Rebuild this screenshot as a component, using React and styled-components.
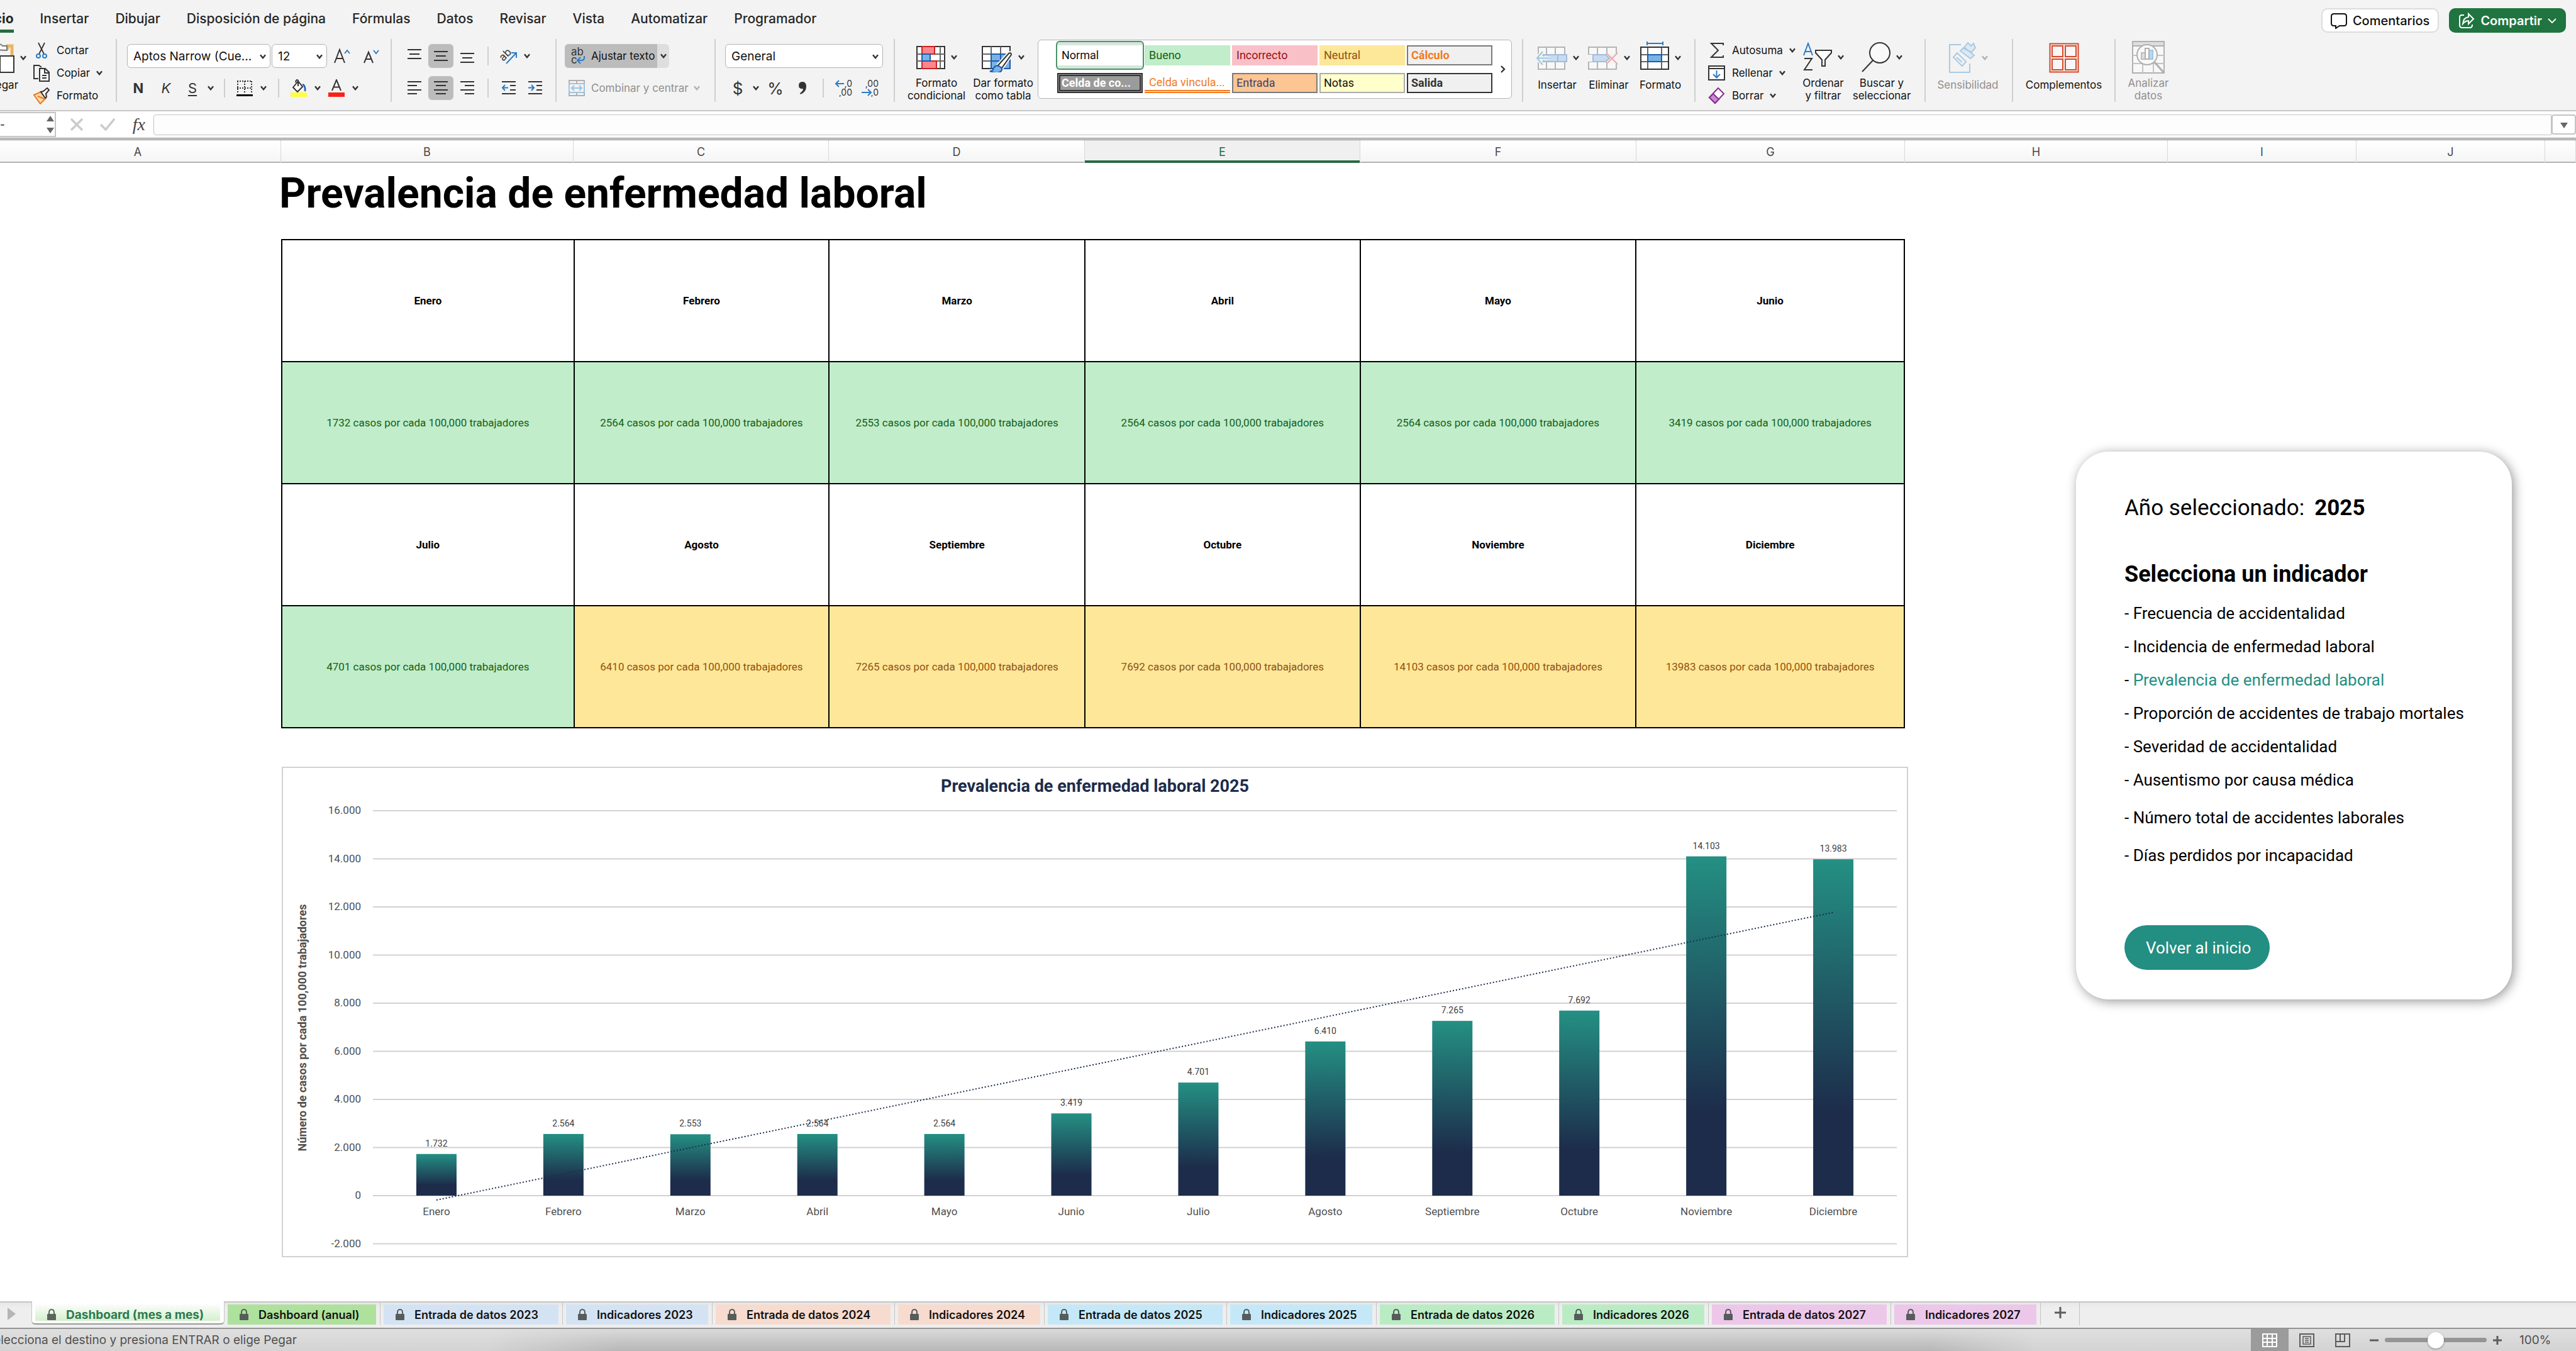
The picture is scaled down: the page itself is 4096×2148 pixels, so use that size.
import React from "react"
import styled, { createGlobalStyle, css } from "styled-components"

const GlobalStyle = createGlobalStyle`
  * {
    box-sizing: border-box;
  }

  body {
    margin: 0;
    background: #fff;
    color: #111;
    font-family: Inter, "Liberation Sans", sans-serif;
    font-size: 17px;
    overflow: hidden;
  }

  button, input, select {
    font: inherit;
    color: inherit;
  }

  button {
    padding: 0;
    border: 0;
    background: none;
  }
`;

const INK = "#333";
const BLUE = "#2b7cc4";
const sheetFont = `Roboto, "Liberation Sans", sans-serif`;

/* ---------- data ---------- */

const menu = ["Insertar", "Dibujar", "Disposición de página", "Fórmulas", "Datos", "Revisar", "Vista", "Automatizar", "Programador"];

const columns = [
  ["A", 447], ["B", 465], ["C", 406], ["D", 407], ["E", 438], ["F", 439],
  ["G", 427], ["H", 418], ["I", 300], ["J", 300], ["", 49],
];

const template = columns.map(([, w]) => `minmax(0, ${w}fr)`).join(" ");

const months = [
  ["Enero", 1732], ["Febrero", 2564], ["Marzo", 2553], ["Abril", 2564],
  ["Mayo", 2564], ["Junio", 3419], ["Julio", 4701], ["Agosto", 6410],
  ["Septiembre", 7265], ["Octubre", 7692], ["Noviembre", 14103], ["Diciembre", 13983],
];

const cellStyles = [
  { name: "Normal", selected: true },
  { name: "Bueno", bg: "#c1edca", color: "#145f16" },
  { name: "Incorrecto", bg: "#f9c0c8", color: "#951218" },
  { name: "Neutral", bg: "#fde799", color: "#8f5210" },
  { name: "Cálculo", bg: "#f0f0f0", color: "#f47a20", bold: true, border: "2px solid #7a7a7a" },
  { name: "Celda de co...", bg: "#9b9b9b", color: "#fff", bold: true, border: "5px double #333" },
  { name: "Celda vincula...", color: "#f47a20", underline: true },
  { name: "Entrada", bg: "#fcc592", color: "#3d3f70", border: "2px solid #7a7a7a" },
  { name: "Notas", bg: "#feffca", border: "2px solid #ababab" },
  { name: "Salida", bg: "#f0f0f0", color: "#333", bold: true, border: "2px solid #333" },
];

const indicators = [
  "Frecuencia de accidentalidad",
  "Incidencia de enfermedad laboral",
  "Prevalencia de enfermedad laboral",
  "Proporción de accidentes de trabajo mortales",
  "Severidad de accidentalidad",
  "Ausentismo por causa médica",
  "Número total de accidentes laborales",
  "Días perdidos por incapacidad",
];

const sheets = [
  ["Dashboard (anual)", "#aee19c", 248],
  ["Entrada de datos 2023", "#d4e3f4", 290],
  ["Indicadores 2023", "#d4e3f4", 238],
  ["Entrada de datos 2024", "#f7dbce", 290],
  ["Indicadores 2024", "#f7dbce", 238],
  ["Entrada de datos 2025", "#c4e8f8", 290],
  ["Indicadores 2025", "#c4e8f8", 238],
  ["Entrada de datos 2026", "#baecc4", 290],
  ["Indicadores 2026", "#baecc4", 238],
  ["Entrada de datos 2027", "#ecc7e9", 290],
  ["Indicadores 2027", "#ecc7e9", 238],
];

/* ---------- icons ---------- */

const Svg = ({ w, h, children, ...rest }) => (
  <svg width={w} height={h} viewBox={`0 0 ${w} ${h}`} fill="none" stroke={INK} strokeWidth="2" aria-hidden="true" {...rest}>
    {children}
  </svg>
);

const Chevron = ({ color = INK }) => (
  <Svg w={10} h={8} stroke={color}><path d="M1 1.2 5 6.2 9 1.2" strokeWidth="2.4" /></Svg>
);

const PasteIcon = () => (
  <Svg w={41} h={50}>
    <path d="M16 6H3v38h15" stroke="#e08a2c" strokeWidth="3" />
    <path d="M30 12V6h7v18" stroke="#e8b565" strokeWidth="5" />
    <path d="M10 12V6h6q2-5 6 0h7v7z" fill="#fff" stroke="#777" />
    <path d="M18 22h22v26H18z" fill="#fff" />
  </Svg>
);

const CutIcon = () => (
  <Svg w={28} h={28}>
    <path d="M9 2 18 20M19 2 10 20" strokeWidth="1.8" />
    <circle cx="9" cy="23" r="3" stroke={BLUE} />
    <circle cx="19" cy="23" r="3" stroke={BLUE} />
  </Svg>
);

const CopyIcon = () => (
  <Svg w={28} h={28}>
    <path d="M9 23H2V2h8l4 3" />
    <path d="M11 7h9l6 6v14H11zM19 7v7h7M15 18h7M15 22h7" fill="#fff" />
  </Svg>
);

const BrushIcon = () => (
  <Svg w={28} h={28}>
    <path d="M2 13 13 8l8 10-9 9z" fill="#fbd9a0" stroke="#e6792b" />
    <path d="M8 15 18 19" stroke="#e6792b" />
    <path d="m13 8 4-1 6-5 3 3-5 6 1 5-2 2z" fill="#fff" />
  </Svg>
);

const FontSizeIcon = ({ up }) => (
  <Svg w={28} h={26}>
    {up ? (
      <>
        <path d="M2 24 10 3l8 21M5 17h10" />
        <path d="m18 9 4-5 4 5" stroke={BLUE} />
      </>
    ) : (
      <>
        <path d="M3 24 10 7l7 17M5 18h9" />
        <path d="m18 4 4 5 4-5" stroke={BLUE} />
      </>
    )}
  </Svg>
);

const BorderIcon = () => (
  <Svg w={26} h={26}>
    <path d="M1 2h24M1 13h24M2 2v20M13 2v20M24 2v20" strokeDasharray="2 2" />
    <path d="M0 24.500h26" stroke="#000" strokeWidth="3" />
  </Svg>
);

const FillIcon = () => (
  <Svg w={28} h={28}>
    <path d="M5 13 13 3l7 9-8 8zM13 11V2q-3-3-4 3" fill="#fff" />
    <path d="M20 8q5 2 4 11" stroke="#2060b0" strokeWidth="2.600" />
    <path d="M1 21h26v7H1z" fill="#ffff3c" stroke="none" />
  </Svg>
);

const FontColorIcon = () => (
  <Svg w={28} h={28}>
    <path d="m7 18 7-17 7 17M9.500 12.500h9" />
    <path d="M1 21h26v7H1z" fill="#fb2018" stroke="none" />
  </Svg>
);

const lineSets = {
  top: [[1, 3, 22], [4, 10, 16], [1, 17, 22]],
  middle: [[1, 6, 22], [4, 13, 16], [1, 20, 22]],
  bottom: [[1, 9, 22], [4, 16, 16], [1, 23, 22]],
  left: [[1, 3, 22], [1, 9, 15], [1, 16, 22], [1, 22, 15]],
  center: [[1, 3, 22], [4, 9, 16], [1, 16, 22], [4, 22, 16]],
  right: [[1, 3, 22], [8, 9, 15], [1, 16, 22], [8, 22, 15]],
};

const LinesIcon = ({ kind }) => (
  <Svg w={24} h={26}>
    {lineSets[kind].map(([x, y, w]) => <path key={y} d={`M${x} ${y}h${w}`} />)}
  </Svg>
);

const IndentIcon = ({ out }) => (
  <Svg w={24} h={26}>
    <path d="M1 3h22M14 9h9M14 16h9M1 22h22" />
    <path d={out ? "M11 12.500H2M6 8l-4 4.500L6 17" : "M1 12.500h9M6 8l4 4.500L6 17"} stroke={BLUE} />
  </Svg>
);

const OrientationIcon = () => (
  <Svg w={28} h={28}>
    <text x="1" y="19" fontSize="17" fill={INK} stroke="none" transform="rotate(-45 8 16)">ab</text>
    <path d="M10 26 26 9M18 9h8v8" stroke={BLUE} />
  </Svg>
);

const WrapIcon = () => (
  <Svg w={26} h={28}>
    <text x="4" y="13" fontSize="17" fill={INK} stroke="none">ab</text>
    <text x="4" y="26" fontSize="17" fill={INK} stroke="none">c</text>
    <path d="M25 14v3q0 4-5 4h-5M19 16l-5 5 5 5" stroke={BLUE} />
  </Svg>
);

const MergeIcon = () => (
  <Svg w={26} h={26} stroke="#b0b0b0">
    <path d="M1 1h24v24H1zM13 1v5M13 20v5" />
    <path d="M1 6h24v14H1z" fill="#f3f3f3" stroke="#9cc4e2" />
    <path d="M5 13h16M9 9l-4 4 4 4M17 9l4 4-4 4" stroke="#9cc4e2" />
  </Svg>
);

const DecimalIcon = ({ more }) => (
  <Svg w={28} h={28}>
    <text x="27" y="12" textAnchor="end" fontSize="14" fill={INK} stroke="none">{more ? ",0" : ",00"}</text>
    <text x="27" y="26" textAnchor="end" fontSize="14" fill={INK} stroke="none">{more ? ",00" : ",0"}</text>
    <path d={more ? "M14 7H1M6 2 1 7l5 5" : "M0 21h14M10 16l5 5-5 5"} stroke={BLUE} />
  </Svg>
);

const ConditionalIcon = () => (
  <Svg w={46} h={48}>
    <path d="M1 7h44v35H1z" fill="#fff" />
    <path d="M1 19h44M1 30h44M9 7v35M38 7v35" stroke="#666" />
    <path d="M9 7h20v12H9zM9 30h23v12H9z" fill="#fb868c" stroke="#cc2222" />
    <path d="M9 19h13v11H9z" fill="#79b2e6" stroke="#1b5dab" />
  </Svg>
);

const FormatTableIcon = () => (
  <Svg w={49} h={48}>
    <path d="M1 7h44v35H1z" fill="#fff" />
    <path d="M1 19h44M1 30h44M15 7v35M30 7v35" stroke="#666" />
    <path d="M15 19h30v23H15z" fill="#79b2e6" stroke="#1b5dab" />
    <path d="M15 30h30M30 19v23" stroke="#1b5dab" />
    <path d="M25 38 43 18q4-2 4 2L32 41z" fill="#fff" stroke="#f3f3f3" strokeWidth="6" />
    <path d="M25 38 43 18q4-2 4 2L32 41z" fill="#fff" />
    <path d="M13 46q5 0 6-5 4-6 10-2 5 3 2 7-6 6-18 0z" fill="#79b2e6" stroke="#1b5dab" />
  </Svg>
);

const InsertCellsIcon = () => (
  <Svg w={50} h={48} stroke="#b4b4b4">
    <path d="M4 7h42v35H4zM4 19h42M4 30h42M17 7v35M31 7v35" fill="#f8f8f8" />
    <path d="M12 19h37v11H12z" fill="#c8dbef" stroke="#a2bcdc" />
    <path d="M20 19v11M35 19v11" stroke="#a2bcdc" />
    <path d="M22 24.500H2M11 14 2 24.500 11 35" stroke="#f3f3f3" strokeWidth="6" />
    <path d="M22 24.500H2M11 14 2 24.500 11 35" stroke="#9fc6e4" />
  </Svg>
);

const DeleteCellsIcon = () => (
  <Svg w={48} h={48} stroke="#b4b4b4">
    <path d="M1 7h44v35H1zM1 19h44M1 30h44M15 7v35M30 7v35" fill="#f8f8f8" />
    <path d="M-1 19h10v11H-1zM30 17h18v16H30z" fill="#f3f3f3" stroke="none" />
    <path d="M8 19h20l6 5.500-6 5.500H8z" fill="#c8dbef" stroke="#a2bcdc" />
    <path d="m29 16 18 18M47 16 29 34" stroke="#f0a9a9" />
  </Svg>
);

const FormatCellsIcon = () => (
  <Svg w={46} h={52}>
    <path d="M1 9h44v35H1z" fill="#fff" />
    <path d="M1 21h44M1 32h44M12 9v35M34 9v35" stroke="#666" />
    <path d="M1 9h44v35H1z" />
    <path d="M12 21h22v11H12z" fill="#79b2e6" stroke="#1b5dab" />
    <path d="M11 3h25M11 0v6M36 0v6" stroke={BLUE} />
  </Svg>
);

const SumIcon = () => (
  <Svg w={28} h={26}><path d="M24 5V2H5l11 11L5 24h19v-3" /></Svg>
);

const FillDownIcon = () => (
  <Svg w={28} h={26}>
    <path d="M1 2h25v22H1zM1 6h25" fill="#fff" />
    <path d="M13.500 9v11M8 15l5.500 5.500L19 15" stroke={BLUE} />
  </Svg>
);

const EraserIcon = () => (
  <Svg w={28} h={28} stroke="#86308f">
    <path d="M2 17 16 2l9 9L11 26z" fill="#fff" />
    <path d="m2 17 6-6 9 9-6 6z" fill="#cb8ad2" />
  </Svg>
);

const SortIcon = () => (
  <Svg w={46} h={48}>
    <path d="m1 21 7-19 7 19M4 15h9" stroke={BLUE} />
    <path d="M2 26h12L2 44h13" />
    <path d="M20 13h25v4L35 28v10h-5V28L20 17z" fill="#fff" />
  </Svg>
);

const SearchIcon = () => (
  <Svg w={46} h={50}>
    <circle cx="29" cy="18" r="16" fill="#f9f9f9" />
    <path d="M18 30 1 48" />
  </Svg>
);

const SensitivityIcon = () => (
  <Svg w={44} h={50} stroke="#a9cae3">
    <path d="M20 4H2v44h32V34" />
    <path d="m8 24 6-7 14 14-6 7zM13 24l9 8" fill="#f3f3f3" />
    <path d="m19 14 6-6 16 13-6 5zM24 10l7-9 5 5 4-4 3 7-6 7z" fill="#dce9f3" />
  </Svg>
);

const AddinsIcon = () => (
  <Svg w={48} h={48} stroke="#d4492a">
    <path d="M1.500 1.500h45v45h-45z" />
    <path d="M5 5h17v17H5zM26 5h17v17H26zM5 26h17v17H5zM26 26h17v17H26z" fill="#f9f6f5" />
  </Svg>
);

const AnalyzeIcon = () => (
  <Svg w={52} h={52} stroke="#b0b0b0">
    <path d="M1 1h50v50H1z" fill="#f8f8f8" />
    <path d="M1 1h50v7H1z" fill="#dedede" />
    <path d="M1 23h50M1 36h50M17 36v15M34 36v15" stroke="#c4c4c4" />
    <circle cx="24" cy="22" r="16" fill="#f8f8f8" />
    <path d="M36 34 51 51" strokeWidth="3" />
    <path d="M15 19h6v10h-6z" fill="#dedede" stroke="#c0bcb6" />
    <path d="M27 15h6v14h-6z" fill="#bcd6ee" stroke="#9fc6e4" />
    <path d="M21 12h6v17h-6z" fill="#fff" />
  </Svg>
);

const CommentIcon = () => (
  <Svg w={26} h={26} stroke="#111">
    <path d="M5 2h16q4 0 4 4v11q0 4-4 4h-7l-6 4v-4H5q-4 0-4-4V6q0-4 4-4z" />
  </Svg>
);

const ShareIcon = () => (
  <Svg w={26} h={26} stroke="#fff">
    <path d="M9 4H5Q2 4 2 8v12q0 4 4 4h12q4 0 4-4v-1" />
    <path d="M16 2v5Q8 8 7 18q4-5 9-5v5l8-8z" />
  </Svg>
);

const LockIcon = ({ color }) => (
  <Svg w={16} h={18} stroke={color}>
    <path d="M4 9V6q0-5 4-5t4 5v3" />
    <rect x="1" y="8" width="14" height="10" rx="1" fill={color} stroke="none" />
  </Svg>
);

const ViewIcon = ({ kind }) => (
  <Svg w={24} h={22} stroke={kind === "normal" ? "#fff" : "#5c5c5c"}>
    <path d="M1 1h22v20H1z" />
    {kind === "normal" && <path d="M1 8h22M1 14h22M8 1v20M16 1v20" />}
    {kind === "page" && <path d="M6 5h12v12H6zM9 8h6M9 11h6M9 14h6" strokeWidth="1.500" />}
    {kind === "break" && <path d="M1 13h14V1M8 1v12" />}
  </Svg>
);

/* ---------- window chrome ---------- */

const Page = styled.div`
  display: flex;
  flex-direction: column;
  min-height: 100vh;
`;

const Header = styled.header`
  flex: none;
  background: #f3f3f3;
  border-bottom: 2px solid #c6c6c6;
  height: 177px;
`;

const TopBar = styled.div`
  display: flex;
  align-items: flex-start;
  height: 62px;
  padding-right: 16px;
`;

const Menu = styled.nav`
  display: flex;
  gap: 42px;
  margin-left: -34px;
  flex: 1;
`;

const MenuLink = styled.a`
  padding: 16px 0 3px;
  line-height: 28px;
  font-size: 21px;
  font-weight: ${p => (p.$active ? 700 : 500)};
  color: #262626;
  text-decoration: none;
  white-space: nowrap;
  border-bottom: 5px solid ${p => (p.$active ? "#256b41" : "transparent")};
`;

const Actions = styled.div`
  display: flex;
  gap: 16px;
  padding-top: 13px;
`;

const ActionButton = styled.button`
  display: flex;
  align-items: center;
  gap: 9px;
  height: 39px;
  padding: 0 13px;
  border-radius: 10px;
  font-size: 20px;
  font-weight: ${p => (p.$primary ? 600 : 500)};
  color: ${p => (p.$primary ? "#fff" : "#111")};
  background: ${p => (p.$primary ? "#20743f" : "#fff")};
  border: 2px solid ${p => (p.$primary ? "#20743f" : "#dcdcdc")};
`;

const Ribbon = styled.div`
  display: flex;
  height: 100px;
`;

const Group = styled.div`
  display: flex;
  flex: 0 0 ${p => p.$w}px;
  padding-left: ${p => p.$pad || 0}px;
  border-right: 2px solid #cfcfcf;

  &:last-child {
    border-right: 0;
  }
`;

const Rows = styled.div`
  display: grid;
  grid-template-rows: 38px 38px;
  gap: 13px;
  padding-top: 8px;
`;

const Row = styled.div`
  display: flex;
  align-items: center;
  gap: ${p => p.$gap || 0}px;
  padding-left: ${p => p.$pad || 0}px;
`;

const Divider = styled.span`
  width: 2px;
  height: 30px;
  margin: 0 ${p => p.$m || 12}px;
  background: #cfcfcf;
`;

const ToolButton = styled.button`
  display: flex;
  align-items: center;
  justify-content: center;
  width: ${p => p.$w || 40}px;
  height: 38px;
  border-radius: 6px;
  font-size: 22px;
  color: ${INK};
  ${p => p.$on && css`
    background: #bcbcbc;
  `}
`;

const Glyph = styled.span`
  font-size: ${p => p.$size || 22}px;
  font-weight: ${p => (p.$bold ? 700 : 400)};
  font-style: ${p => (p.$italic ? "italic" : "normal")};
  text-decoration: ${p => (p.$underline ? "underline" : "none")};
  text-underline-offset: 3px;
`;

const SelectWrap = styled.label`
  position: relative;
  display: block;
  width: ${p => p.$w}px;

  svg {
    position: absolute;
    right: 7px;
    top: 16px;
    pointer-events: none;
  }
`;

const Select = styled.select`
  appearance: none;
  width: 100%;
  height: 38px;
  padding: 0 18px 0 9px;
  border: 1px solid #b4b4b4;
  border-radius: 6px;
  background: #fff;
  font-size: 19px;
`;

const SplitButton = styled.div`
  display: flex;
  height: 38px;
  border-radius: 6px;
  overflow: hidden;
  color: ${p => (p.$disabled ? "#8f8f8f" : "#111")};
  background: ${p => (p.$on ? "#dedede" : "none")};

  button:first-child {
    display: flex;
    align-items: center;
    gap: 10px;
    padding: 0 4px 0 6px;
    white-space: nowrap;
    background: ${p => (p.$on ? "#bcbcbc" : "none")};
  }
`;

const MiniList = styled.div`
  display: grid;
  grid-template-rows: repeat(3, 36px);
  width: ${p => p.$w}px;
`;

const MiniButton = styled.button`
  display: flex;
  align-items: center;
  gap: 10px;
  white-space: nowrap;
`;

const BigButton = styled.button`
  display: flex;
  flex-direction: column;
  align-items: ${p => (p.$start ? "flex-start" : "center")};
  width: ${p => p.$w}px;
  padding-top: 2px;
  line-height: 20px;
  color: ${p => (p.$disabled ? "#8f8f8f" : "#111")};
  margin-left: ${p => (p.$start ? -18 : 0)}px;

  span {
    white-space: pre-line;
  }
`;

const BigIcon = styled.div`
  display: flex;
  align-items: center;
  gap: 9px;
  height: 56px;
  margin-bottom: 5px;
`;

const Gallery = styled.div`
  display: flex;
  align-items: center;
  justify-content: space-between;
  width: 754px;
  height: 94px;
  margin: 1px 0 0 2px;
  padding: 0 9px 0 30px;
  border: 1px solid #b4b4b4;
  border-radius: 6px;
  background: #fff;
`;

const GalleryGrid = styled.div`
  display: grid;
  grid-template-columns: repeat(5, 136px);
  grid-template-rows: 32px 32px;
  gap: 12px 3px;
`;

const StyleCell = styled.button`
  position: relative;
  z-index: 0;
  text-align: left;
  padding-left: ${p => (p.$border ? (p.$border.startsWith("5") ? 2 : 5) : 7)}px;
  font-family: ${sheetFont};
  font-size: 18px;
  line-height: 20px;
  white-space: nowrap;
  font-weight: ${p => (p.$bold ? 700 : 400)};
  color: ${p => p.$color || "#111"};
  background: ${p => p.$bg || "#fff"};
  border: ${p => p.$border || "0"};
  ${p => p.$underline && css`
    border-bottom: 5px double #f47a20;
    padding-top: 3px;
  `}
  ${p => p.$selected && css`
    box-shadow: 0 -5px #d6e6dc, 0 5px #d6e6dc;

    &::after {
      content: "";
      position: absolute;
      inset: -7px -2px;
      border: 2px solid #4a9468;
      border-radius: 6px;
    }
  `}
`;

/* ---------- formula bar ---------- */

const FormulaBar = styled.div`
  display: flex;
  align-items: center;
  flex: none;
  height: 42px;
`;

const NameBox = styled.div`
  display: flex;
  align-items: center;
  justify-content: space-between;
  width: 89px;
  height: 40px;
  border: 2px solid #c4c4c4;
  border-left: 0;
`;

const FormulaTools = styled.div`
  display: flex;
  justify-content: space-between;
  align-items: center;
  width: 155px;
  padding: 0 13px 0 23px;
`;

const Fx = styled.span`
  font-family: "Liberation Serif", serif;
  font-style: italic;
  font-size: 28px;
  line-height: 32px;
  color: #444;
`;

const FormulaInput = styled.input`
  flex: 1;
  height: 33px;
  border: 1px solid #c4c4c4;
  border-radius: 4px 0 0 4px;
  background: #fdfdfd;
`;

const ExpandButton = styled.button`
  width: 39px;
  height: 32px;
  border: 2px solid #c4c4c4;
  border-radius: 4px;
  background: #fff;
`;

const Splitter = styled.div`
  flex: none;
  height: 4px;
  background: #d0d0d0;
  border-top: 1px solid #8c8c8c;
  border-bottom: 1px solid #8c8c8c;
`;

const ColumnHeaders = styled.div`
  display: grid;
  grid-template-columns: ${template};
  flex: none;
  height: 36px;
  background: linear-gradient(#fff, #f5f5f5);
  border-bottom: 2px solid #b3b3b3;
`;

const ColumnHeader = styled.div`
  display: flex;
  align-items: center;
  justify-content: center;
  font-size: 18px;
  color: #484848;
  border-right: 1px solid #d8d8d8;
  padding-right: ${p => (p.$first ? 8 : 0)}px;
  ${p => p.$active && css`
    height: 36px;
    color: #1f6b3b;
    background: #f0f0f0;
    box-shadow: inset 0 -4px #256b41;
  `}
`;

/* ---------- sheet ---------- */

const Sheet = styled.main`
  display: grid;
  grid-template-columns: ${template};
  grid-template-rows: auto auto auto;
  align-content: start;
  flex: 1;
  font-family: ${sheetFont};
`;

const Title = styled.h1`
  grid-area: 1 / 2 / 2 / 8;
  margin: 0 0 0 -3px;
  padding: 10px 0 33px;
  font-size: 66px;
  line-height: 78px;
  color: #000;
`;

const MonthTable = styled.table`
  grid-area: 2 / 2 / 3 / 8;
  width: 100%;
  table-layout: fixed;
  border-collapse: collapse;
  font-size: 17px;
  color: #000;

  th, td {
    height: 194px;
    padding: 0;
    text-align: center;
    border: 2px solid #000;
  }
`;

const Col = styled.col`
  width: ${p => p.$w}%;
`;

const CaseCell = styled.td`
  color: ${p => (p.$high ? "#8f5210" : "#145f16")};
  background: ${p => (p.$high ? "#fee799" : "#c1edca")};
`;

const ChartFrame = styled.figure`
  grid-area: 3 / 2 / 4 / 8;
  margin: 61px -5px 0 1px;
  outline: 2px solid #d2d2d2;
  outline-offset: -2px;

  svg {
    display: block;
    width: 100%;
    height: auto;
  }
`;

const Panel = styled.aside`
  grid-area: 1 / 8 / 4 / 12;
  align-self: start;
  margin: 459px 102px 0 272px;
  padding: 67px 40px 47px 77px;
  border-radius: 52px;
  background: #fff;
  box-shadow: 3px 3px 18px rgba(0, 0, 0, 0.42);
  color: #000;
`;

const YearLine = styled.p`
  display: flex;
  gap: 16px;
  margin: 0 0 59px;
  font-size: 35px;
  line-height: 46px;
`;

const PanelTitle = styled.h2`
  margin: 0 0 13px;
  font-size: 36px;
  line-height: 46px;
`;

const IndicatorList = styled.ul`
  list-style: none;
  margin: 0 0 84px;
  padding: 0;
`;

const Indicator = styled.li`
  font-size: 26px;
  line-height: 53px;
  white-space: nowrap;

  &:nth-child(n + 7) {
    margin-top: 7px;
  }

  a {
    color: ${p => (p.$active ? "#238f83" : "#000")};
    text-decoration: none;
  }
`;

const HomeButton = styled.button`
  height: 71px;
  padding: 0 30px 0 34px;
  border-radius: 36px;
  background: #238e82;
  color: #fff;
  font-size: 26px;
`;

/* ---------- bottom bars ---------- */

const TabBar = styled.div`
  display: flex;
  flex: none;
  height: 44px;
  border-top: 2px solid #c6c6c6;
  border-bottom: 2px solid #949494;
  background: linear-gradient(#e6e6e6, #eee 8px);
`;

const ScrollButton = styled.button`
  width: 50px;
  padding-right: 13px;
`;

const SheetTab = styled.button`
  width: ${p => p.$w}px;
  height: 35px;
  padding: 3px 6px 0 5px;
  border-right: 1px solid #c4c4c4;
  ${p => p.$active && css`
    height: 37px;
    padding-bottom: 4px;
    margin-top: -2px;
    padding-top: 5px;
    background: #fff;
    border: 1px solid #c4c4c4;
    border-top: 0;
    border-bottom: 2px solid #999;
    border-radius: 0 0 6px 6px;
  `}
`;

const TabFill = styled.span`
  display: flex;
  align-items: center;
  gap: 15px;
  height: ${p => (p.$active ? 26 : 32)}px;
  padding-top: ${p => (p.$active ? 6 : 0)}px;
  padding-left: 18px;
  white-space: nowrap;
  font-size: ${p => (p.$active ? 19 : 18)}px;
  font-weight: ${p => (p.$active ? 700 : 600)};
  color: ${p => (p.$active ? "#2c7a50" : "#111")};
  background: ${p => p.$bg};
`;

const AddTab = styled.button`
  width: 62px;
  height: 36px;
  border-right: 1px solid #c4c4c4;
`;

const StatusBar = styled.footer`
  position: relative;
  display: flex;
  align-items: center;
  flex: none;
  height: 35px;
  font-size: 19px;
  color: #505050;
  background: linear-gradient(#dfdfdf, #d3d3d3);

  /* soft shade under the middle of the bar */
  &::before {
    content: "";
    position: absolute;
    inset: 0;
    background: linear-gradient(rgba(0, 0, 0, 0.02), rgba(0, 0, 0, 0.13));
    mask-image: linear-gradient(to right, transparent 19%, #000 24%, #000 75%, transparent 79%);
  }
`;

const StatusText = styled.span`
  flex: 1;
  margin-left: -22px;
  white-space: nowrap;
`;

const ViewButtons = styled.div`
  display: flex;
  margin-right: 15px;
`;

const ViewButton = styled.button`
  display: flex;
  align-items: center;
  justify-content: center;
  width: ${p => (p.$on ? 60 : 57)}px;
  height: 35px;
  background: ${p => (p.$on ? "#9b9b9b" : "none")};
`;

const ZoomButton = styled.button`
  display: flex;
  align-items: center;
  width: 14px;
  height: 24px;
`;

const ZoomSlider = styled.input`
  appearance: none;
  width: 162px;
  height: 7px;
  margin: 0 10px;
  border-radius: 4px;
  background: #959595;

  &::-webkit-slider-thumb {
    appearance: none;
    width: 26px;
    height: 26px;
    border-radius: 50%;
    background: #fff;
    box-shadow: 0 1px 3px rgba(0, 0, 0, 0.4);
  }
`;

const ZoomValue = styled.span`
  width: 118px;
  padding-left: 28px;
`;

/* ---------- chart ---------- */

const CHART_W = 2586;
const CHART_H = 780;
const LEFT = 145;
const RIGHT = 2568;
const TOP = 70;
const STEP = 76.5;
const SLOT = (RIGHT - LEFT) / months.length;

const yOf = v => TOP + ((16000 - v) / 2000) * STEP;
const xOf = i => LEFT + SLOT * (i + 0.5);
const format = n => n.toString().replace(/\B(?=(\d{3})+$)/, ".");

// least squares line through the monthly values
function trend(values) {
  const n = values.length;
  const mx = (n - 1) / 2;
  const my = values.reduce((a, b) => a + b, 0) / n;
  let top = 0;
  let bottom = 0;
  values.forEach((v, i) => {
    top += (i - mx) * v;
    bottom += (i - mx) * (i - mx);
  });
  const slope = top / bottom;
  return [my - slope * mx, my + slope * mx];
}

function Chart() {
  const ticks = [16000, 14000, 12000, 10000, 8000, 6000, 4000, 2000, 0, -2000];
  const [start, end] = trend(months.map(m => m[1]));

  return (
    <ChartFrame>
      <svg viewBox={`0 0 ${CHART_W} ${CHART_H}`} role="img" aria-label="Prevalencia de enfermedad laboral 2025">
        <defs>
          <linearGradient id="bar" x1="0" y1="0" x2="0" y2="1">
            <stop offset="0" stopColor="#249083" />
            <stop offset="0.75" stopColor="#1d2c4b" />
          </linearGradient>
        </defs>
        <text x="1293" y="40" textAnchor="middle" fontSize="27" fontWeight="700" fill="#1d2c4b">
          Prevalencia de enfermedad laboral 2025
        </text>
        <text transform="translate(39 415) rotate(-90)" textAnchor="middle" fontSize="18" fontWeight="700" fill="#505050">
          Número de casos por cada 100,000 trabajadores
        </text>
        {ticks.map(t => (
          <g key={t}>
            <path d={`M${LEFT} ${yOf(t)}H${RIGHT}`} stroke="#d2d2d2" strokeWidth="2" />
            <text x="126" y={yOf(t) + 5} textAnchor="end" fontSize="17" fill="#505050">{format(t)}</text>
          </g>
        ))}
        {months.map(([name, value], i) => (
          <g key={name} textAnchor="middle">
            <rect x={xOf(i) - 32} y={yOf(value)} width="64" height={yOf(0) - yOf(value)} fill="url(#bar)" />
            <text x={xOf(i)} y={yOf(value) - 12} fontSize="14" fill="#404040">{format(value)}</text>
            <text x={xOf(i)} y="713" fontSize="17" fill="#505050">{name}</text>
          </g>
        ))}
        <path
          d={`M${xOf(0)} ${yOf(start)}L${xOf(11)} ${yOf(end)}`}
          stroke="#1d2c4b"
          strokeWidth="2"
          strokeDasharray="2 3"
        />
      </svg>
    </ChartFrame>
  );
}

/* ---------- parts ---------- */

function Combo({ w, label, value }) {
  return (
    <SelectWrap $w={w}>
      <Select aria-label={label} defaultValue={value}>
        <option>{value}</option>
      </Select>
      <Chevron />
    </SelectWrap>
  );
}

function Tool({ w, on, label, children }) {
  return <ToolButton type="button" $w={w} $on={on} aria-label={label}>{children}</ToolButton>;
}

function Big({ w, icon, label, disabled, start, menu: hasMenu = true }) {
  return (
    <BigButton type="button" $w={w} $disabled={disabled} $start={start}>
      <BigIcon>
        {icon}
        {hasMenu && <Chevron color={disabled ? "#b0b0b0" : INK} />}
      </BigIcon>
      <span>{label}</span>
    </BigButton>
  );
}

function Mini({ icon, label, hasMenu }) {
  return (
    <MiniButton type="button">
      {icon}
      {label}
      {hasMenu && <Chevron />}
    </MiniButton>
  );
}

function RibbonTools() {
  return (
    <Ribbon>
      <Group $w={186}>
        <Big w={70} start icon={<PasteIcon />} label="Pegar" />
        <MiniList $w={120}>
          <Mini icon={<CutIcon />} label="Cortar" />
          <Mini icon={<CopyIcon />} label="Copiar" hasMenu />
          <Mini icon={<BrushIcon />} label="Formato" />
        </MiniList>
      </Group>

      <Group $w={437} $pad={12}>
        <Rows>
          <Row $gap={2} $pad={4}>
            <Combo w={228} label="Fuente" value="Aptos Narrow (Cue..." />
            <Combo w={88} label="Tamaño de fuente" value="12" />
            <Tool w={44} label="Aumentar tamaño"><FontSizeIcon up /></Tool>
            <Tool w={44} label="Disminuir tamaño"><FontSizeIcon /></Tool>
          </Row>
          <Row>
            <Tool w={44} label="Negrita"><Glyph $bold>N</Glyph></Tool>
            <Tool w={44} label="Cursiva"><Glyph $italic>K</Glyph></Tool>
            <Tool w={40} label="Subrayado"><Glyph $underline>S</Glyph></Tool>
            <Tool w={18} label="Más subrayados"><Chevron /></Tool>
            <Divider />
            <Tool w={38} label="Bordes"><BorderIcon /></Tool>
            <Tool w={22} label="Más bordes"><Chevron /></Tool>
            <Divider />
            <Tool w={38} label="Color de relleno"><FillIcon /></Tool>
            <Tool w={22} label="Más rellenos"><Chevron /></Tool>
            <Tool w={38} label="Color de fuente"><FontColorIcon /></Tool>
            <Tool w={22} label="Más colores"><Chevron /></Tool>
          </Row>
        </Rows>
      </Group>

      <Group $w={262} $pad={16}>
        <Rows>
          <Row $gap={2}>
            <Tool label="Alinear arriba"><LinesIcon kind="top" /></Tool>
            <Tool on label="Alinear al medio"><LinesIcon kind="middle" /></Tool>
            <Tool label="Alinear abajo"><LinesIcon kind="bottom" /></Tool>
            <Divider $m={10} />
            <Tool label="Orientación"><OrientationIcon /></Tool>
            <Tool w={14} label="Más orientaciones"><Chevron /></Tool>
          </Row>
          <Row $gap={2}>
            <Tool label="Izquierda"><LinesIcon kind="left" /></Tool>
            <Tool on label="Centrar"><LinesIcon kind="center" /></Tool>
            <Tool label="Derecha"><LinesIcon kind="right" /></Tool>
            <Divider $m={10} />
            <Tool label="Disminuir sangría"><IndentIcon out /></Tool>
            <Tool label="Aumentar sangría"><IndentIcon /></Tool>
          </Row>
        </Rows>
      </Group>

      <Group $w={253} $pad={13}>
        <Rows>
          <Row>
            <SplitButton $on>
              <button type="button"><WrapIcon />Ajustar texto</button>
              <Tool w={19} label="Más opciones de ajuste"><Chevron /></Tool>
            </SplitButton>
          </Row>
          <Row>
            <SplitButton $disabled>
              <button type="button"><MergeIcon />Combinar y centrar</button>
              <Tool w={19} label="Más opciones de combinar"><Chevron color="#b0b0b0" /></Tool>
            </SplitButton>
          </Row>
        </Rows>
      </Group>

      <Group $w={285} $pad={15}>
        <Rows>
          <Combo w={251} label="Formato de número" value="General" />
          <Row>
            <Tool w={40} label="Moneda"><Glyph $size={26}>$</Glyph></Tool>
            <Tool w={18} label="Más monedas"><Chevron /></Tool>
            <Tool w={44} label="Porcentaje"><Glyph $size={26}>%</Glyph></Tool>
            <Tool w={42} label="Millares">
              <Svg w={14} h={22} stroke="none"><path d="M7 1q6 0 6 8 0 8-9 12l-1-2q5-3 5-7-7 1-7-5 0-6 6-6z" fill={INK} /></Svg>
            </Tool>
            <Divider $m={11} />
            <Tool w={42} label="Aumentar decimales"><DecimalIcon more /></Tool>
            <Tool w={42} label="Disminuir decimales"><DecimalIcon /></Tool>
          </Row>
        </Rows>
      </Group>

      <Group $w={999} $pad={13}>
        <Big w={106} icon={<ConditionalIcon />} label={"Formato\ncondicional"} />
        <Big w={106} icon={<FormatTableIcon />} label={"Dar formato\ncomo tabla"} />
        <Gallery>
          <GalleryGrid>
            {cellStyles.map(s => (
              <StyleCell
                key={s.name}
                type="button"
                $bg={s.bg}
                $color={s.color}
                $bold={s.bold}
                $border={s.border}
                $underline={s.underline}
                $selected={s.selected}
              >
                {s.name}
              </StyleCell>
            ))}
          </GalleryGrid>
          <button type="button" aria-label="Más estilos">
            <Svg w={8} h={12}><path d="m1 1 5 5-5 5" strokeWidth="2.400" /></Svg>
          </button>
        </Gallery>
      </Group>

      <Group $w={274} $pad={13}>
        <Big w={82} icon={<InsertCellsIcon />} label="Insertar" />
        <Big w={82} icon={<DeleteCellsIcon />} label="Eliminar" />
        <Big w={82} icon={<FormatCellsIcon />} label="Formato" />
      </Group>

      <Group $w={366} $pad={20}>
        <MiniList $w={141}>
          <Mini icon={<SumIcon />} label="Autosuma" hasMenu />
          <Mini icon={<FillDownIcon />} label="Rellenar" hasMenu />
          <Mini icon={<EraserIcon />} label="Borrar" hasMenu />
        </MiniList>
        <Big w={84} icon={<SortIcon />} label={"Ordenar\ny filtrar"} />
        <Big w={102} icon={<SearchIcon />} label={"Buscar y\nseleccionar"} />
      </Group>

      <Group $w={139}>
        <Big w={134} disabled icon={<SensitivityIcon />} label="Sensibilidad" />
      </Group>

      <Group $w={163}>
        <Big w={161} menu={false} icon={<AddinsIcon />} label="Complementos" />
      </Group>

      <Group $w={110}>
        <Big w={104} disabled menu={false} icon={<AnalyzeIcon />} label={"Analizar\ndatos"} />
      </Group>
    </Ribbon>
  );
}

function Months() {
  const halves = [months.slice(0, 6), months.slice(6)];
  const total = columns.slice(1, 7).reduce((sum, [, w]) => sum + w, 0);

  return (
    <MonthTable>
      <colgroup>
        {columns.slice(1, 7).map(([name, w]) => <Col key={name} $w={(w / total) * 100} />)}
      </colgroup>
      <tbody>
        {halves.map((half, i) => (
          <React.Fragment key={i}>
            <tr>
              {half.map(([name]) => <th key={name} scope="col">{name}</th>)}
            </tr>
            <tr>
              {half.map(([name, value]) => (
                <CaseCell key={name} $high={value > 5000}>
                  {value} casos por cada 100,000 trabajadores
                </CaseCell>
              ))}
            </tr>
          </React.Fragment>
        ))}
      </tbody>
    </MonthTable>
  );
}

function IndicatorPanel() {
  return (
    <Panel>
      <YearLine>Año seleccionado: <b>2025</b></YearLine>
      <PanelTitle>Selecciona un indicador</PanelTitle>
      <IndicatorList>
        {indicators.map((name, i) => (
          <Indicator key={name} $active={i === 2}>
            - <a href="#indicador">{name}</a>
          </Indicator>
        ))}
      </IndicatorList>
      <HomeButton type="button">Volver al inicio</HomeButton>
    </Panel>
  );
}

function App() {
  return (
    <Page>
      <GlobalStyle />
      <Header>
        <TopBar>
          <Menu>
            <MenuLink href="#inicio" $active>Inicio</MenuLink>
            {menu.map(name => <MenuLink key={name} href="#menu">{name}</MenuLink>)}
          </Menu>
          <Actions>
            <ActionButton type="button"><CommentIcon />Comentarios</ActionButton>
            <ActionButton type="button" $primary>
              <ShareIcon />Compartir
              <Svg w={14} h={10} stroke="#fff"><path d="m1 2 6 6 6-6" strokeWidth="1.800" /></Svg>
            </ActionButton>
          </Actions>
        </TopBar>
        <RibbonTools />
      </Header>

      <FormulaBar>
        <NameBox>
          <span>-</span>
          <Svg w={14} h={28} stroke="none"><path d="m7 0 6 9H1zM7 28l6-9H1z" fill="#666" /></Svg>
        </NameBox>
        <FormulaTools>
          <Svg w={20} h={20} stroke="#cbcbcb"><path d="m1 1 18 18M19 1 1 19" strokeWidth="3.500" /></Svg>
          <Svg w={24} h={20} stroke="#cbcbcb"><path d="m1 10 8 8L23 1" strokeWidth="3.500" /></Svg>
          <Fx>fx</Fx>
        </FormulaTools>
        <FormulaInput type="text" aria-label="Barra de fórmulas" />
        <ExpandButton type="button" aria-label="Expandir">
          <Svg w={12} h={9} stroke="none"><path d="M0 0h12L6 9z" fill="#666" /></Svg>
        </ExpandButton>
      </FormulaBar>
      <Splitter />
      <ColumnHeaders>
        {columns.map(([name], i) => (
          <ColumnHeader key={i} $first={i === 0} $active={name === "E"}>{name}</ColumnHeader>
        ))}
      </ColumnHeaders>

      <Sheet>
        <Title>Prevalencia de enfermedad laboral</Title>
        <Months />
        <Chart />
        <IndicatorPanel />
      </Sheet>

      <TabBar>
        <ScrollButton type="button" aria-label="Hoja siguiente">
          <Svg w={13} h={20} stroke="none"><path d="M0 0v20l13-10z" fill="#b5b5b5" /></Svg>
        </ScrollButton>
        <SheetTab type="button" $w={307} $active>
          <TabFill $active $bg="linear-gradient(#fbfdfb, #d4f0cd)">
            <LockIcon color="#5c665c" />Dashboard (mes a mes)
          </TabFill>
        </SheetTab>
        {sheets.map(([name, bg, w]) => (
          <SheetTab key={name} type="button" $w={w}>
            <TabFill $bg={bg}><LockIcon color="#555c5a" />{name}</TabFill>
          </SheetTab>
        ))}
        <AddTab type="button" aria-label="Nueva hoja">
          <Svg w={18} h={18} stroke="#5c5c5c"><path d="M9 0v18M0 9h18" strokeWidth="3" /></Svg>
        </AddTab>
      </TabBar>

      <StatusBar>
        <StatusText>Selecciona el destino y presiona ENTRAR o elige Pegar</StatusText>
        <ViewButtons>
          <ViewButton type="button" $on aria-label="Normal"><ViewIcon kind="normal" /></ViewButton>
          <ViewButton type="button" aria-label="Diseño de página"><ViewIcon kind="page" /></ViewButton>
          <ViewButton type="button" aria-label="Saltos de página"><ViewIcon kind="break" /></ViewButton>
        </ViewButtons>
        <ZoomButton type="button" aria-label="Alejar">
          <Svg w={14} h={14} stroke="#5c5c5c"><path d="M0 7h14" strokeWidth="3" /></Svg>
        </ZoomButton>
        <ZoomSlider type="range" min="0" max="100" defaultValue="50" aria-label="Zoom" />
        <ZoomButton type="button" aria-label="Acercar">
          <Svg w={14} h={14} stroke="#5c5c5c"><path d="M0 7h14M7 0v14" strokeWidth="3" /></Svg>
        </ZoomButton>
        <ZoomValue>100%</ZoomValue>
      </StatusBar>
    </Page>
  );
}

export default App
